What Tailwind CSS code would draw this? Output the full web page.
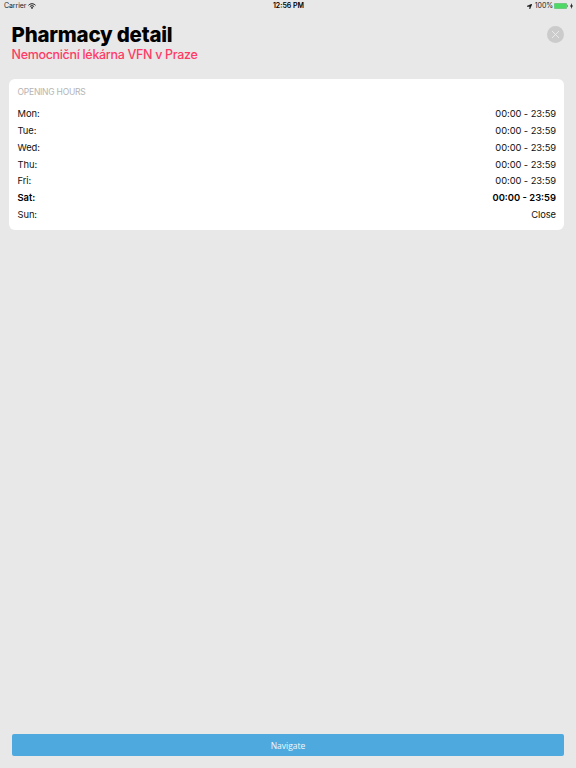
<!DOCTYPE html>
<html lang="en">
  <head>
    <meta charset="UTF-8" />
    <meta name="viewport" content="width=device-width, initial-scale=1.0" />
    <title>Pharmacy detail</title>
    <script src="https://cdn.jsdelivr.net/npm/@tailwindcss/browser@4"></script>
  </head>
  <body class="bg-[#e8e8e8] flex flex-col h-screen overflow-hidden text-black font-['Inter',sans-serif]">
    <!-- Status bar -->
    <div class="grid grid-cols-3 items-center h-3 pl-1 pr-[3px] text-[7px] leading-3 text-[#222]">
      <div class="flex items-center gap-[2px]">
        <span class="tracking-[-0.1px]">Carrier</span>
        <svg class="w-2 h-[6px]" viewBox="0 0 16 12" fill="none" stroke="#111" stroke-width="2">
          <path d="M1 4.5C5 .5 11 .5 15 4.5" />
          <path d="M3.7 7.3c2.5-2.4 6.1-2.4 8.6 0" />
          <path d="M8 12 5.5 9.4c1.5-1.3 3.5-1.3 5 0z" fill="#111" stroke="none" />
        </svg>
      </div>
      <div class="text-center font-semibold text-black">12:56 PM</div>
      <div class="flex items-center justify-end">
        <svg class="w-[5px] h-[5px] mr-[3px]" viewBox="0 0 10 10" fill="#111"><path d="M10 0 5.5 10V5L0 4.5z" stroke="#111" /></svg>
        <span class="tracking-[-0.1px]">100%</span>
        <svg class="w-[14px] h-[6px] ml-[1px]" viewBox="0 0 14 6">
          <rect x="0.25" y="0.25" width="12.5" height="5.5" rx="1" fill="#4cd964" stroke="#6aa875" stroke-width="0.5" />
          <path d="M13.2 2v2c.8-.3.8-1.7 0-2z" fill="#222" />
        </svg>
        <svg class="w-[3px] h-[6px] ml-[2px]" viewBox="0 0 6 12" fill="#111"><path d="M4 0 0 7h2.5L2 12l4-7H3.5z" /></svg>
      </div>
    </div>

    <!-- Header -->
    <div class="flex justify-between items-start pt-[11px] pl-[11.5px] pr-3">
      <div>
        <h1 class="text-[20.5px] leading-6 font-extrabold tracking-[-0.22px]">Pharmacy detail</h1>
        <h2 class="mt-px text-[12.5px] leading-[14px] font-medium tracking-[-0.32px] text-[#ff3b66]">Nemocniční lékárna VFN v Praze</h2>
      </div>
      <button type="button" aria-label="Close" class="mt-[3.4px] w-[17px] h-[17px] rounded-full bg-[#cbcbcb] flex justify-center items-center">
        <svg class="w-[9px] h-[9px]" viewBox="0 0 9 9" stroke="#ececec" stroke-width="0.9"><path d="M1 1l7 7M8 1 1 8" /></svg>
      </button>
    </div>

    <!-- Opening hours -->
    <div class="mt-[17px] ml-[9px] mr-[12px] h-[151px] rounded-[6px] bg-white pt-[7px] pl-[8.5px] pr-[8px]">
      <h3 class="text-[8.5px] leading-3 tracking-[-0.22px] text-[#b4b4b4]">OPENING HOURS</h3>
      <div class="mt-[8.1px] text-[9.4px] leading-[16.85px] tracking-[-0.08px] text-[#111]">
        <div class="flex justify-between"><span>Mon:</span><span>00:00 - 23:59</span></div>
        <div class="flex justify-between"><span>Tue:</span><span>00:00 - 23:59</span></div>
        <div class="flex justify-between"><span>Wed:</span><span>00:00 - 23:59</span></div>
        <div class="flex justify-between"><span>Thu:</span><span>00:00 - 23:59</span></div>
        <div class="flex justify-between"><span>Fri:</span><span>00:00 - 23:59</span></div>
        <div class="flex justify-between font-semibold tracking-normal text-black"><span>Sat:</span><span>00:00 - 23:59</span></div>
        <div class="flex justify-between"><span>Sun:</span><span>Close</span></div>
      </div>
    </div>

    <button type="button" class="mt-auto mb-3 mx-3 h-[22px] pt-[2px] shrink-0 rounded-[2px] bg-[#4eaade] text-[#f2f9fd] text-[8.5px] font-['Open_Sans',sans-serif]">Navigate</button>
  </body>
</html>
